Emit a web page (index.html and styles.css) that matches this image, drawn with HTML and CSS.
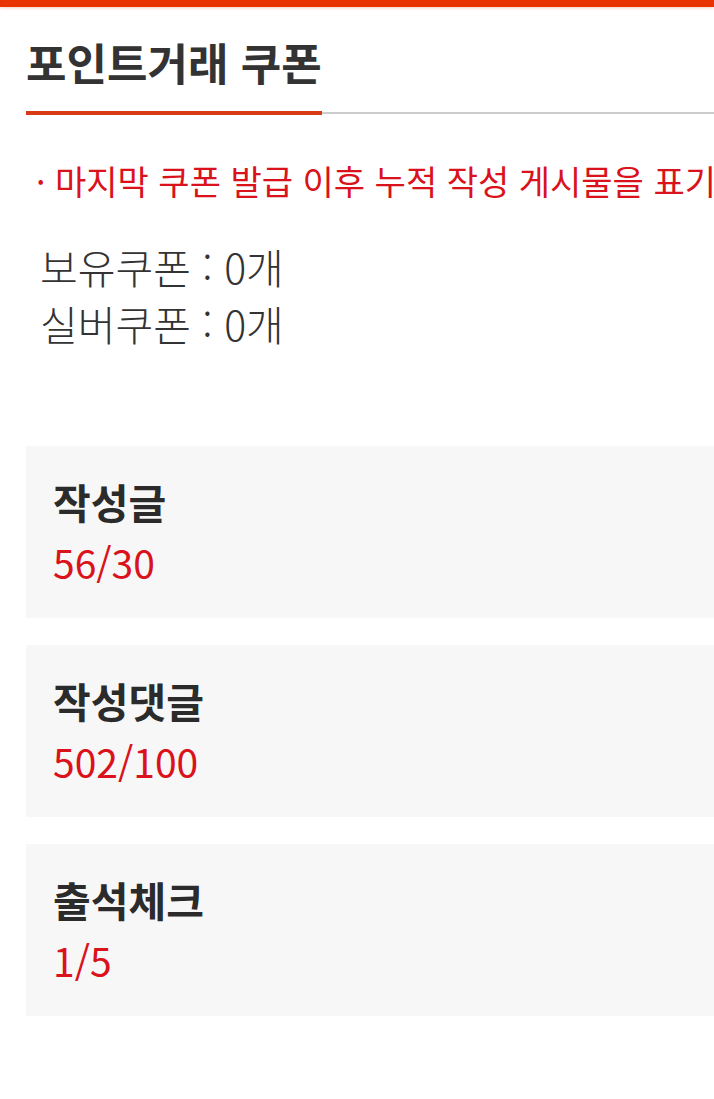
FILE: index.html
```html
<!DOCTYPE html>
<html lang="ko">
<head>
<meta charset="utf-8">
<link rel="stylesheet" href="styles.css">
</head>
<body>
<div class="topbar"></div>
<div class="page">
  <div class="title-wrap">
    <h1 class="title">포인트거래 쿠폰</h1>
  </div>
  <p class="notice">· 마지막 쿠폰 발급 이후 누적 작성 게시물을 표기합니다.</p>
  <div class="counts">
    <div class="count">보유쿠폰 : 0개</div>
    <div class="count">실버쿠폰 : 0개</div>
  </div>
  <div class="cards">
    <div class="card">
      <div class="card-title">작성글</div>
      <div class="card-value">56/30</div>
    </div>
    <div class="card">
      <div class="card-title">작성댓글</div>
      <div class="card-value">502/100</div>
    </div>
    <div class="card">
      <div class="card-title">출석체크</div>
      <div class="card-value">1/5</div>
    </div>
  </div>
</div>
</body>
</html>
```
FILE: styles.css
```css
html, body {
  margin: 0;
  padding: 0;
  background: #fff;
  overflow: hidden;
}
body {
  font-family: "Noto Sans CJK KR", "Noto Sans", sans-serif;
  color: #333;
}
.topbar {
  height: 7px;
  background: #e83300;
  box-shadow: 0 1px 3px rgba(232, 51, 0, 0.25);
}
.page {
  padding-left: 26px;
}
.title-wrap {
  border-bottom: 2px solid #cccccc;
}
.title {
  display: inline-block;
  margin: 0 0 -3px 0;
  padding: 22px 0 16px 0;
  font-size: 44px;
  font-weight: 700;
  line-height: 66px;
  color: #333;
  border-bottom: 4px solid #d93a16;
}
.notice {
  margin: 0;
  padding: 46px 0 0 10px;
  font-size: 34px;
  line-height: 42px;
  color: #d9121b;
  white-space: nowrap;
}
.counts {
  padding: 36px 0 0 14px;
}
.count {
  font-size: 41px;
  line-height: 57px;
  font-weight: 300;
  color: #333;
}
.cards {
  margin-top: 94px;
  display: flex;
  flex-direction: column;
  gap: 27px;
  width: 760px;
}
.card {
  background: #f7f7f7;
  height: 172px;
  box-sizing: border-box;
  padding: 27px 0 0 27px;
}
.card-title {
  font-size: 41px;
  font-weight: 700;
  line-height: 56px;
  color: #2b2b2b;
}
.card-value {
  margin-top: 8px;
  font-size: 39px;
  line-height: 50px;
  color: #d9121b;
}
```
